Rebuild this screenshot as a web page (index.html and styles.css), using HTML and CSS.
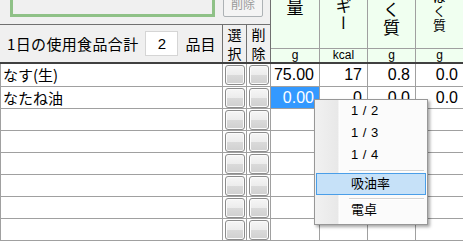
FILE: index.html
```html
<!DOCTYPE html>
<html lang="ja">
<head>
  <meta charset="UTF-8" />
  <title>食品入力</title>
  <link rel="stylesheet" href="styles.css">
</head>
<body>
<div class="sheet">

  <div class="head">
    <div class="head-left">
      <div class="toolbar">
        <div class="green-box"></div>
        <button class="btn-top" disabled>削除</button>
      </div>
      <div class="summary-row">
        <div class="summary">
          <span class="sum-label">1日の使用食品合計</span>
          <input class="count" type="text" value="2">
          <span>品目</span>
        </div>
        <div class="hsel">選<br>択</div>
        <div class="hsel last">削<br>除</div>
      </div>
    </div>

    <div class="hcol c1">
      <div class="htitle"><span class="vt vt1">使用量</span></div>
      <div class="unit">g</div>
    </div>
    <div class="hcol c2">
      <div class="htitle"><span class="vt vt2">エネルギー</span></div>
      <div class="unit">kcal</div>
    </div>
    <div class="hcol c3">
      <div class="htitle"><span class="vt vt3">たんぱく質</span></div>
      <div class="unit">g</div>
    </div>
    <div class="hcol c4">
      <div class="htitle"><span class="vt vt4">動物性たんぱく質</span></div>
      <div class="unit">g</div>
    </div>
  </div>

  <div class="rows">
    <div class="row">
      <div class="cell name">なす(生)</div>
      <div class="cell sel"><span class="gbtn"></span></div>
      <div class="cell sel"><span class="gbtn"></span></div>
      <div class="cell num n1">75.00</div>
      <div class="cell num n2">17</div>
      <div class="cell num n3">0.8</div>
      <div class="cell num n4">0.0</div>
    </div>
    <div class="row">
      <div class="cell name">なたね油</div>
      <div class="cell sel"><span class="gbtn"></span></div>
      <div class="cell sel"><span class="gbtn"></span></div>
      <div class="cell num n1 active">0.00</div>
      <div class="cell num n2">0</div>
      <div class="cell num n3">0.0</div>
      <div class="cell num n4">0.0</div>
    </div>
    <div class="row">
      <div class="cell name"></div>
      <div class="cell sel"><span class="gbtn"></span></div>
      <div class="cell sel"><span class="gbtn"></span></div>
      <div class="cell num n1"></div><div class="cell num n2"></div><div class="cell num n3"></div><div class="cell num n4"></div>
    </div>
    <div class="row">
      <div class="cell name"></div>
      <div class="cell sel"><span class="gbtn"></span></div>
      <div class="cell sel"><span class="gbtn"></span></div>
      <div class="cell num n1"></div><div class="cell num n2"></div><div class="cell num n3"></div><div class="cell num n4"></div>
    </div>
    <div class="row">
      <div class="cell name"></div>
      <div class="cell sel"><span class="gbtn"></span></div>
      <div class="cell sel"><span class="gbtn"></span></div>
      <div class="cell num n1"></div><div class="cell num n2"></div><div class="cell num n3"></div><div class="cell num n4"></div>
    </div>
    <div class="row">
      <div class="cell name"></div>
      <div class="cell sel"><span class="gbtn"></span></div>
      <div class="cell sel"><span class="gbtn"></span></div>
      <div class="cell num n1"></div><div class="cell num n2"></div><div class="cell num n3"></div><div class="cell num n4"></div>
    </div>
    <div class="row">
      <div class="cell name"></div>
      <div class="cell sel"><span class="gbtn"></span></div>
      <div class="cell sel"><span class="gbtn"></span></div>
      <div class="cell num n1"></div><div class="cell num n2"></div><div class="cell num n3"></div><div class="cell num n4"></div>
    </div>
    <div class="row">
      <div class="cell name"></div>
      <div class="cell sel"><span class="gbtn"></span></div>
      <div class="cell sel"><span class="gbtn"></span></div>
      <div class="cell num n1"></div><div class="cell num n2"></div><div class="cell num n3"></div><div class="cell num n4"></div>
    </div>
    <div class="row">
      <div class="cell name"></div>
      <div class="cell sel"><span class="gbtn"></span></div>
      <div class="cell sel"><span class="gbtn"></span></div>
      <div class="cell num n1"></div><div class="cell num n2"></div><div class="cell num n3"></div><div class="cell num n4"></div>
    </div>
  </div>

  <!-- 右クリックメニュー -->
  <div class="menu">
    <div class="menu-item">1 / 2</div>
    <div class="menu-item">1 / 3</div>
    <div class="menu-item">1 / 4</div>
    <div class="menu-sep"></div>
    <div class="menu-item hover">吸油率</div>
    <div class="menu-sep sep2"></div>
    <div class="menu-item">電卓</div>
  </div>

</div>
</body>
</html>
```

FILE: styles.css
```css
html, body {
  margin: 0;
  padding: 0;
  background: #ffffff;
  overflow: hidden;
}

.sheet {
  position: relative;
  width: 463px;
  height: 241px;
  overflow: hidden;
  font-family: "Noto Sans CJK JP", sans-serif;
  color: #000;
}

/* ---------- header ---------- */
.head {
  display: flex;
  height: 64px;
  box-sizing: border-box;
  border-bottom: 2px solid #404040;
  background: #f0f0f0;
}

.head-left {
  width: 270px;
  display: flex;
  flex-direction: column;
}

.toolbar {
  height: 25px;
  box-sizing: border-box;
  border-bottom: 1px solid #707070;
  display: flex;
  align-items: flex-start;
}

.green-box {
  margin-left: 10px;
  width: 205px;
  height: 17px;
  box-sizing: border-box;
  border: 3px solid #8fc187;
  border-top: none;
}

.btn-top {
  margin-left: 8px;
  margin-top: -9px;
  width: 40px;
  height: 26px;
  padding: 0;
  border: 1px solid #adb2b5;
  border-radius: 2px;
  background: #f4f4f4;
  color: #9a9a9a;
  font-family: "Noto Sans CJK JP", sans-serif;
  font-size: 12px;
  line-height: 24px;
}

.summary-row {
  display: flex;
  height: 37px;
}

.summary {
  width: 223px;
  box-sizing: border-box;
  border-right: 1px solid #707070;
  padding-left: 7px;
  display: flex;
  align-items: center;
  font-size: 15px;
  white-space: nowrap;
}

.sum-label {
  letter-spacing: 0.35px;
}

.count {
  width: 33px;
  height: 25px;
  box-sizing: border-box;
  margin: 0 7px 0 7px;
  padding: 0;
  border: 1px solid #d5d5d5;
  background: #fff;
  text-align: center;
  font-family: "Liberation Sans", sans-serif;
  font-size: 15px;
  color: #000;
}

.hsel {
  width: 24px;
  box-sizing: border-box;
  border-right: 1px solid #707070;
  text-align: center;
  font-size: 14px;
  line-height: 19px;
}

.hsel.last {
  width: 23px;
  border-right: none;
}

.hcol {
  display: flex;
  flex-direction: column;
  background: #f0fff0;
  box-sizing: border-box;
  border-right: 1px solid #a0a0a0;
}

.c1 { width: 50px; border-left: 1px solid #707070; }
.c2 { width: 48px; }
.c3 { width: 48px; }
.c4 { flex: 1; border-right: none; }

.htitle {
  height: 48px;
  overflow: hidden;
  display: flex;
  flex-direction: column;
  align-items: center;
}

.vt {
  writing-mode: vertical-rl;
  text-orientation: upright;
  line-height: 1;
  letter-spacing: 1px;
  flex-shrink: 0;
}

.vt1 { font-size: 17px; margin-top: -37px; }
.vt2 { font-size: 16px; margin-top: -53px; }
.vt3 { font-size: 17px; margin-top: -53px; }
.vt4 { font-size: 13px; margin-top: -79px; }

.unit {
  height: 14px;
  box-sizing: border-box;
  border-top: 1px solid #a0a0a0;
  text-align: center;
  font-family: "Liberation Sans", sans-serif;
  font-size: 12px;
  line-height: 13px;
}

/* ---------- rows ---------- */
.row {
  display: flex;
  height: 22px;
  box-sizing: border-box;
  border-bottom: 1px solid #a0a0a0;
}

.row:first-child {
  height: 23px;
}

.cell {
  box-sizing: border-box;
  border-right: 1px solid #a0a0a0;
  background: #fff;
  background-clip: padding-box;
}

.name {
  width: 223px;
  border-left: 1px solid #a0a0a0;
  padding-left: 2px;
  font-size: 15px;
  line-height: 21px;
  white-space: nowrap;
}

.sel {
  width: 24px;
  display: flex;
  align-items: center;
  justify-content: center;
}

.gbtn {
  width: 20px;
  height: 20px;
  box-sizing: border-box;
  border: 1px solid #8c8c8c;
  border-radius: 3px;
  background: linear-gradient(#f6f6f6 0%, #ececec 50%, #dadada 50%, #d0d0d0 100%);
  box-shadow: inset 0 0 0 1px #fbfbfb;
}

.num {
  text-align: right;
  padding-right: 5px;
  font-family: "Liberation Sans", sans-serif;
  font-size: 16px;
  line-height: 21px;
}

.n1 { width: 49px; }
.n2 { width: 48px; }
.n3 { width: 48px; }
.n4 { flex: 1; border-right: none; }

.num.active {
  background: #3399ff;
  background-clip: padding-box;
  color: #fff;
}

/* ---------- context menu ---------- */
.menu {
  position: absolute;
  left: 314px;
  top: 99px;
  width: 114px;
  box-sizing: border-box;
  padding: 0 1px 3px 1px;
  border: 1px solid #979797;
  background: linear-gradient(to right, #f1f1f1 0px, #e8e8e8 23px, #ffffff 24px, #fbfbfb 25px, #fbfbfb 100%);
  box-shadow: 2px 2px 3px rgba(0, 0, 0, 0.35);
  font-family: "Liberation Sans", "Noto Sans CJK JP", sans-serif;
  font-size: 13px;
  word-spacing: 1px;
}

.menu-item {
  height: 22px;
  line-height: 22px;
  padding-left: 35px;
  box-sizing: border-box;
}

.menu-item.hover {
  background: #c6e1f8;
  border: 1px solid #4a9ee8;
  line-height: 20px;
  padding-left: 34px;
}

.menu-sep {
  margin: 4px 2px 2px 33px;
  height: 1px;
  background: #d4d4d4;
  box-shadow: 0 1px 0 #ffffff;
}

.menu-sep.sep2 {
  margin: 3px 2px 0 33px;
}
```
